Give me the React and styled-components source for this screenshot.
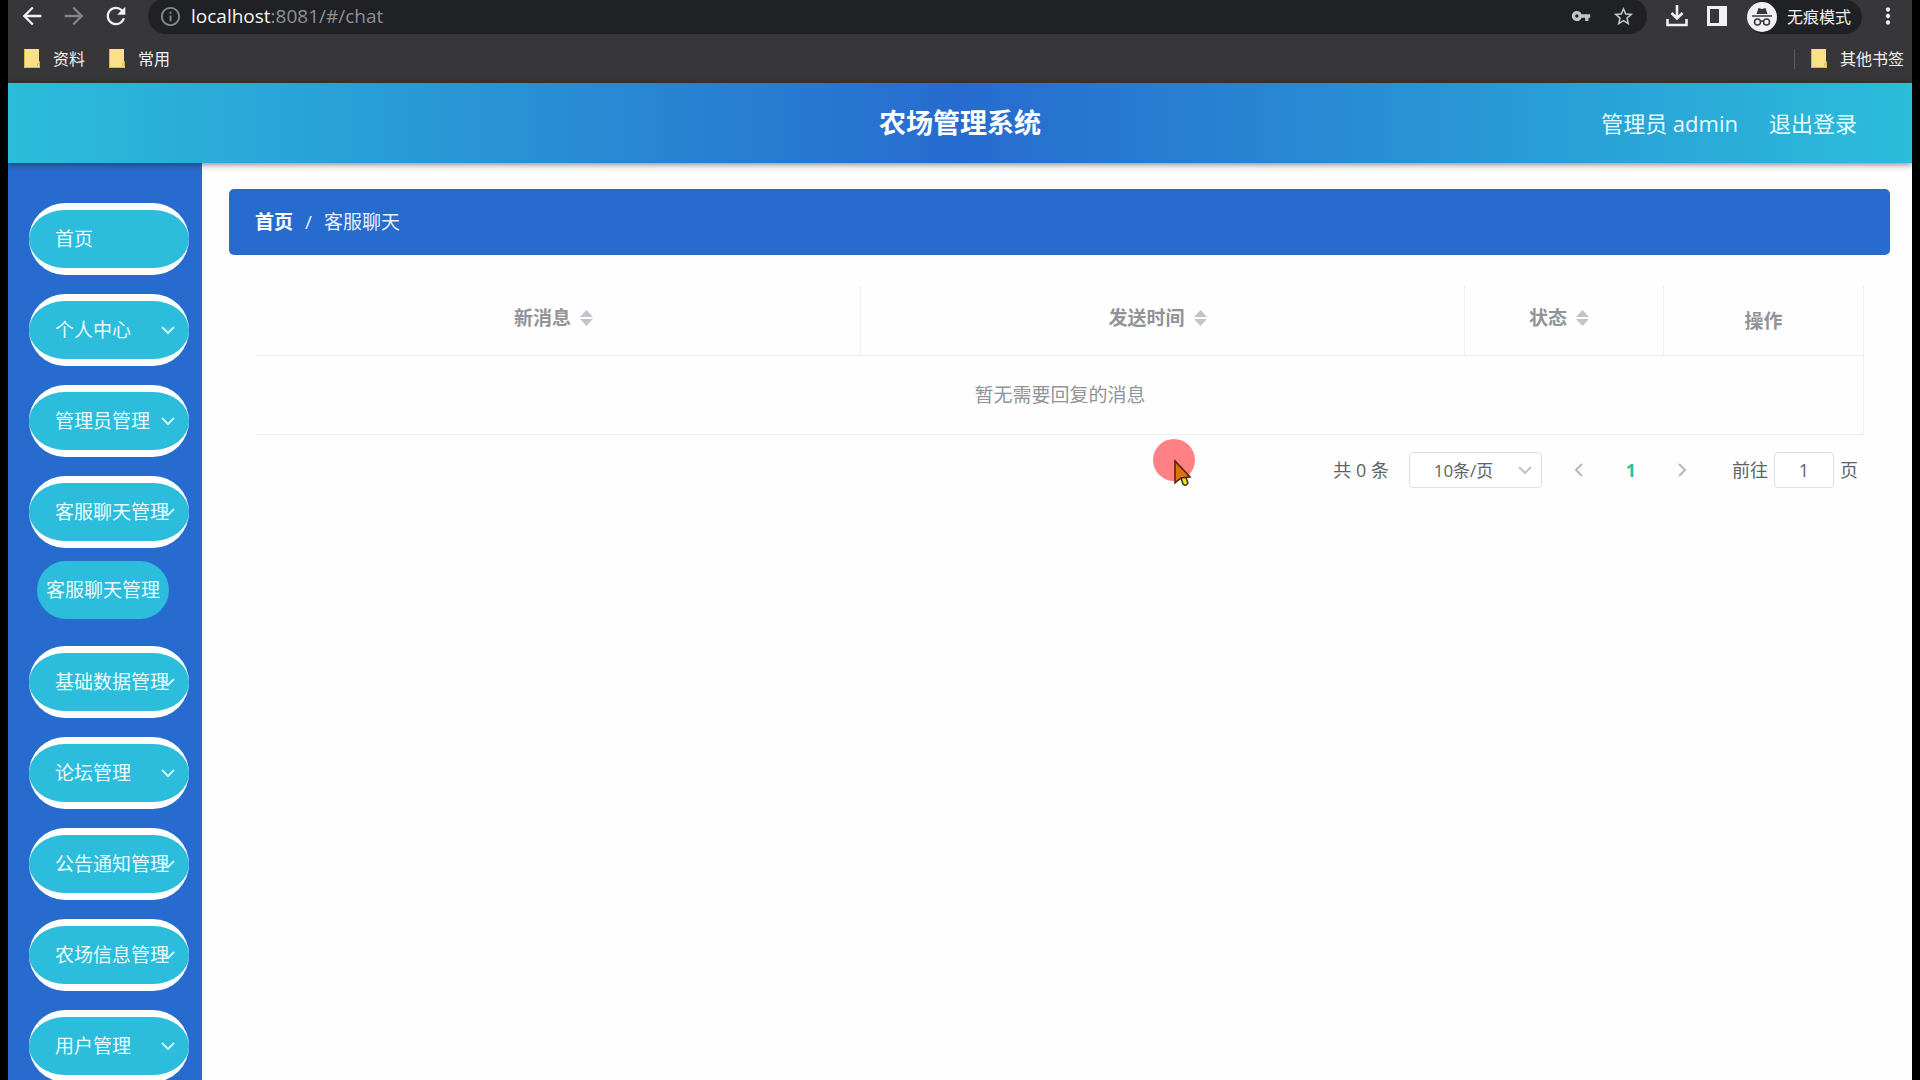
import React from 'react';
import styled, { createGlobalStyle } from 'styled-components';
import {
  MdArrowBack,
  MdArrowForward,
  MdRefresh,
  MdInfoOutline,
  MdVpnKey,
  MdStarBorder,
  MdMoreVert,
} from 'react-icons/md';

const GlobalStyle = createGlobalStyle`
  * {
    box-sizing: border-box;
  }

  body {
    margin: 0;
    background: #000;
    font-family: "Open Sans", "Noto Sans CJK SC", sans-serif;
  }

  button, input, select {
    font-family: inherit;
    font-size: inherit;
    color: inherit;
    margin: 0;
    padding: 0;
  }

  a {
    color: inherit;
    text-decoration: none;
  }
`;

const Window = styled.div`
  display: flex;
  flex-direction: column;
  height: 100vh;
  padding: 0 8px;
  overflow: hidden;
`;

/* browser bars */

const Toolbar = styled.div`
  display: flex;
  align-items: flex-end;
  flex-shrink: 0;
  gap: 22px;
  height: 34px;
  padding: 0 18px 0 14px;
  overflow: hidden;
  background: #37373a;
`;

const ToolbarEnd = styled.div`
  display: flex;
  align-items: flex-end;
  gap: 20px;
  margin-left: -2px;
`;

const IconButton = styled.button`
  display: flex;
  align-items: center;
  justify-content: center;
  flex-shrink: 0;
  width: ${props => props.$width || 20}px;
  height: 36px;
  border: 0;
  background: none;
  color: ${props => (props.$dim ? '#85868a' : '#f1f1f3')};

  svg {
    flex-shrink: 0;
  }
`;

const AddressBar = styled.div`
  display: flex;
  align-items: center;
  flex: 1;
  gap: 22px;
  height: 36px;
  padding: 0 14px 0 12px;
  border-radius: 18px;
  background: #202124;
  color: #9a9b9f;
`;

const Url = styled.div`
  flex: 1;
  margin-left: -11px;
  font-size: 19px;
  line-height: 24px;
  color: #8f9094;

  b {
    font-weight: normal;
    color: #f4f4f6;
  }
`;

const Incognito = styled.button`
  display: flex;
  align-items: center;
  gap: 10px;
  width: 115px;
  height: 34px;
  border: 0;
  border-radius: 17px;
  background: #202124;
  color: #f1f1f3;
  font-size: 16px;
  line-height: 20px;
  white-space: nowrap;
`;

const Bookmarks = styled.nav`
  display: flex;
  align-items: center;
  flex-shrink: 0;
  gap: 24px;
  height: 49px;
  padding: 0 8px 0 16px;
  background: #37373a;
  color: #f1f1f3;
  font-size: 16px;
  line-height: 20px;
`;

const Bookmark = styled.a`
  display: flex;
  align-items: center;
  gap: 13px;
`;

const OtherBookmarks = styled.div`
  display: flex;
  align-items: center;
  gap: 16px;
  margin-left: auto;

  &::before {
    content: "";
    width: 1px;
    height: 20px;
    background: #5c5c60;
  }
`;

/* page */

const Header = styled.header`
  position: relative;
  z-index: 1;
  display: grid;
  grid-template-columns: 1fr auto 1fr;
  align-items: center;
  flex-shrink: 0;
  height: 80px;
  padding: 0 55px;
  background: linear-gradient(90deg, #2bbddb, #276bcf 50%, #2bbddb);
  box-shadow: 0 1px 7px rgba(40, 20, 10, 0.6);
  color: #fff;
`;

const Title = styled.h1`
  grid-column: 2;
  margin: 0;
  font-size: 27px;
  line-height: 36px;
`;

const UserLinks = styled.div`
  display: flex;
  justify-content: flex-end;
  gap: 31px;
  font-size: 22px;
  line-height: 30px;
  color: #e4fbff;
`;

const Body = styled.div`
  display: flex;
  flex: 1;
  min-height: 0;
  background: #fefefe;
`;

const Sidebar = styled.nav`
  display: flex;
  flex-direction: column;
  flex-shrink: 0;
  gap: 19px;
  width: 194px;
  padding: 40px 13px 0 21px;
  overflow: hidden;
  background: #276bcf;
`;

const MenuButton = styled.button`
  position: relative;
  flex-shrink: 0;
  width: 100%;
  height: 72px;
  padding-left: 26px;
  border: solid #fff;
  border-width: 7px 0;
  border-radius: 36px;
  background: #2bbddb;
  color: #e8fcff;
  font-size: 19px;
  line-height: 28px;
  text-align: left;
  white-space: nowrap;
`;

const MenuArrow = styled.svg`
  position: absolute;
  top: 22px;
  right: 14px;
`;

const SubMenu = styled.div`
  flex-shrink: 0;
  margin-top: -6px;
  padding: 0 20px 8px 8px;
`;

const SubMenuLink = styled.a`
  display: flex;
  align-items: center;
  justify-content: center;
  height: 58px;
  border-radius: 29px;
  background: #2bbddb;
  color: #e8fcff;
  font-size: 19px;
  line-height: 28px;
  white-space: nowrap;
`;

const Main = styled.main`
  flex: 1;
  min-width: 0;
  padding: 26px 22px 0 27px;
`;

const Breadcrumb = styled.nav`
  display: flex;
  align-items: center;
  gap: 12px;
  height: 66px;
  padding: 0 26px;
  border-radius: 5px;
  background: #276bcf;
  color: #e6f0ff;
  font-size: 19px;
  line-height: 28px;

  a {
    font-weight: bold;
    color: #fff;
  }
`;

const Content = styled.div`
  padding: 31px 26px 0 28px;
`;

const Table = styled.table`
  width: 100%;
  table-layout: fixed;
  border-collapse: separate;
  border-spacing: 0;
  color: #909399;
  font-size: 19px;
  line-height: 28px;
`;

const HeadCell = styled.th`
  width: ${props => props.$width || 'auto'};
  height: 70px;
  padding: 0;
  border: solid #ebeef5;
  border-width: 0 1px 1px 0;
`;

const SortLabel = styled.div`
  display: flex;
  align-items: center;
  justify-content: center;
  gap: 9px;
  padding: 0 10px 6px 0;
`;

const SortButton = styled.button`
  display: flex;
  border: 0;
  background: none;
`;

const EmptyCell = styled.td`
  height: 79px;
  padding: 0;
  border: solid #ebeef5;
  border-width: 0 1px 1px 0;
  text-align: center;
`;

const Pagination = styled.div`
  display: flex;
  align-items: center;
  justify-content: flex-end;
  height: 36px;
  margin-top: 17px;
  padding-right: 6px;
  color: #606266;
  font-size: 18px;
  line-height: 24px;
`;

const SizeSelect = styled.div`
  position: relative;
  margin: 0 20px;

  select {
    display: block;
    width: 133px;
    height: 36px;
    padding: 0 24px 0 0;
    border: 1px solid #dcdfe6;
    border-radius: 4px;
    background: #fff;
    font-size: 17px;
    appearance: none;
    text-align: center;
    text-align-last: center;
  }

  svg {
    position: absolute;
    top: 11px;
    right: 10px;
    pointer-events: none;
  }
`;

const PageButton = styled.button`
  display: flex;
  align-items: center;
  justify-content: center;
  width: 36px;
  height: 36px;
  border: 0;
  background: none;
  color: #2fbf97;
  font-weight: bold;
`;

const Pages = styled.div`
  display: flex;
  gap: 15px;
  margin-right: 32px;
`;

const Jumper = styled.label`
  display: flex;
  align-items: center;
  gap: 6px;

  input {
    width: 60px;
    height: 36px;
    border: 1px solid #dcdfe6;
    border-radius: 4px;
    background: #fff;
    text-align: center;
  }
`;

const Pointer = styled.svg`
  position: fixed;
  top: 439px;
  left: 1153px;
  z-index: 2;
  pointer-events: none;
`;

const menu = [
  { label: '首页' },
  { label: '个人中心', arrow: true },
  { label: '管理员管理', arrow: true },
  { label: '客服聊天管理', arrow: true, children: ['客服聊天管理'] },
  { label: '基础数据管理', arrow: true },
  { label: '论坛管理', arrow: true },
  { label: '公告通知管理', arrow: true },
  { label: '农场信息管理', arrow: true },
  { label: '用户管理', arrow: true },
];

const columns = [
  { label: '新消息', sortable: true },
  { label: '发送时间', sortable: true },
  { label: '状态', sortable: true, width: '199px' },
  { label: '操作', width: '200px' },
];

function Folder() {
  return (
    <svg width="16" height="19" viewBox="0 0 16 19">
      <path d="M0 0h15v12l1 1v6H0z" fill="#fbe08a" />
      <path d="M0.5 0v18.5H15.5V13l-2 2v2" fill="none" stroke="#dcb84a" />
    </svg>
  );
}

function Chevron({ color, dir = 'down' }) {
  const paths = {
    down: 'M1 4l6 6 6-6',
    left: 'M9 1L3 7l6 6',
    right: 'M4 1l6 6-6 6',
  };
  return <path d={paths[dir]} fill="none" stroke={color} strokeWidth="2" />;
}

function DownloadIcon() {
  return (
    <svg width="22" height="22" viewBox="0 0 22 22" fill="none" stroke="currentColor" strokeWidth="2.6">
      <path d="M11 0v13M5.5 8l5.5 5.5L16.5 8M1.5 14v6h19v-6" />
    </svg>
  );
}

function PanelIcon() {
  return (
    <svg width="20" height="20" viewBox="0 0 20 20" fill="currentColor">
      <path fillRule="evenodd" d="M0 0h20v20H0zM3 3v14h9V3z" />
    </svg>
  );
}

function IncognitoIcon() {
  return (
    <svg width="30" height="30" viewBox="0 0 30 30">
      <circle cx="15" cy="15" r="15" fill="#f1f1f3" />
      <path d="M9.500 12l2-6 3.500 1 3.500-1 2 6z" fill="#37373a" />
      <path d="M5 14h20" stroke="#37373a" strokeWidth="1.5" />
      <g fill="none" stroke="#37373a" strokeWidth="1.5">
        <circle cx="10.500" cy="20" r="3" />
        <circle cx="19.500" cy="20" r="3" />
        <path d="M13.500 19.500q1.500-1 3 0" />
      </g>
    </svg>
  );
}

function BrowserBars() {
  return (
    <>
      <Toolbar>
        <IconButton aria-label="后退"><MdArrowBack size={28} /></IconButton>
        <IconButton aria-label="前进" $dim><MdArrowForward size={28} /></IconButton>
        <IconButton aria-label="刷新"><MdRefresh size={28} /></IconButton>
        <AddressBar>
          <IconButton aria-label="网站信息" $dim><MdInfoOutline size={23} /></IconButton>
          <Url><b>localhost</b>:8081/#/chat</Url>
          <IconButton aria-label="密码"><MdVpnKey size={20} color="#c4c5c9" /></IconButton>
          <IconButton aria-label="收藏"><MdStarBorder size={23} color="#c4c5c9" /></IconButton>
        </AddressBar>
        <ToolbarEnd>
          <IconButton aria-label="下载"><DownloadIcon /></IconButton>
          <IconButton aria-label="侧边栏"><PanelIcon /></IconButton>
          <Incognito><IncognitoIcon />无痕模式</Incognito>
          <IconButton aria-label="更多" $width={12}><MdMoreVert size={26} /></IconButton>
        </ToolbarEnd>
      </Toolbar>
      <Bookmarks>
        <Bookmark href="#"><Folder />资料</Bookmark>
        <Bookmark href="#"><Folder />常用</Bookmark>
        <OtherBookmarks>
          <Bookmark href="#"><Folder />其他书签</Bookmark>
        </OtherBookmarks>
      </Bookmarks>
    </>
  );
}

function Menu() {
  return (
    <Sidebar>
      {menu.map(item => (
        <React.Fragment key={item.label}>
          <MenuButton>
            {item.label}
            {item.arrow && (
              <MenuArrow width="14" height="14"><Chevron color="#c8f4fb" /></MenuArrow>
            )}
          </MenuButton>
          {item.children && (
            <SubMenu>
              {item.children.map(child => (
                <SubMenuLink key={child} href="#/chat">{child}</SubMenuLink>
              ))}
            </SubMenu>
          )}
        </React.Fragment>
      ))}
    </Sidebar>
  );
}

function MessageTable() {
  return (
    <Table>
      <thead>
        <tr>
          {columns.map(col => (
            <HeadCell key={col.label} $width={col.width}>
              {col.sortable ? (
                <SortLabel>
                  {col.label}
                  <SortButton aria-label={`${col.label}排序`}>
                    <svg width="13" height="16" fill="#c0c4cc">
                      <path d="M6.500 0L13 7H0zM0 9h13l-6.500 7z" />
                    </svg>
                  </SortButton>
                </SortLabel>
              ) : col.label}
            </HeadCell>
          ))}
        </tr>
      </thead>
      <tbody>
        <tr>
          <EmptyCell colSpan={columns.length}>暂无需要回复的消息</EmptyCell>
        </tr>
      </tbody>
    </Table>
  );
}

function Pager() {
  return (
    <Pagination>
      <span>共 0 条</span>
      <SizeSelect>
        <select aria-label="每页条数" defaultValue="10">
          <option value="10">10条/页</option>
          <option value="20">20条/页</option>
        </select>
        <svg width="14" height="14"><Chevron color="#c0c4cc" /></svg>
      </SizeSelect>
      <Pages>
        <PageButton aria-label="上一页">
          <svg width="14" height="14"><Chevron dir="left" color="#b4b8bf" /></svg>
        </PageButton>
        <PageButton>1</PageButton>
        <PageButton aria-label="下一页">
          <svg width="14" height="14"><Chevron dir="right" color="#b4b8bf" /></svg>
        </PageButton>
      </Pages>
      <Jumper>
        前往
        <input type="text" defaultValue="1" />
        页
      </Jumper>
    </Pagination>
  );
}

function App() {
  return (
    <Window>
      <GlobalStyle />
      <BrowserBars />
      <Header>
        <Title>农场管理系统</Title>
        <UserLinks>
          <span>管理员 admin</span>
          <a href="#/login">退出登录</a>
        </UserLinks>
      </Header>
      <Body>
        <Menu />
        <Main>
          <Breadcrumb>
            <a href="#/">首页</a>
            <span>/</span>
            <span>客服聊天</span>
          </Breadcrumb>
          <Content>
            <MessageTable />
            <Pager />
          </Content>
        </Main>
      </Body>
      <Pointer width="44" height="52">
        <circle cx="21" cy="21" r="21" fill="#ff8085" />
        <path d="M28 39l2 6q3 3 5-1l-2-5" fill="#e8e020" stroke="#3a3a10" strokeWidth="1.500" />
        <path d="M22 22v22l6-5 9-1z" fill="#d9730f" stroke="#5a1c08" strokeWidth="1.500" />
      </Pointer>
    </Window>
  );
}

export default App;
